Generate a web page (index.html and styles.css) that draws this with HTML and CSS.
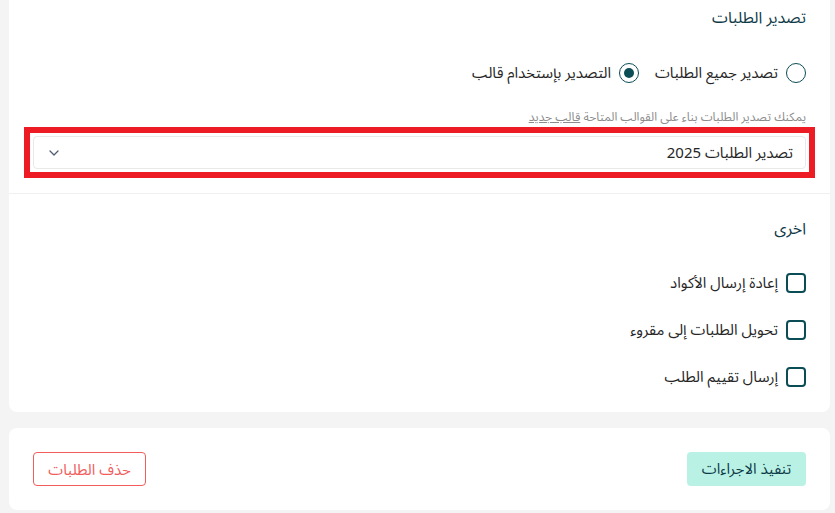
FILE: index.html
```html
<!DOCTYPE html>
<html lang="ar" dir="rtl">
<head>
    <meta charset="UTF-8">
    <meta name="viewport" content="width=device-width, initial-scale=1.0">
    <title>إجراءات الطلبات</title>
    <link rel="stylesheet" href="styles.css">
</head>
<body>

<div class="page">
    <div class="card main-card">
        <div class="block export">
            <h2 class="title">تصدير الطلبات</h2>

            <div class="radios">
                <label class="radio">
                    <span class="radio-dot"></span>
                    <span>تصدير جميع الطلبات</span>
                </label>
                <label class="radio checked">
                    <span class="radio-dot"></span>
                    <span>التصدير بإستخدام قالب</span>
                </label>
            </div>

            <p class="hint">يمكنك تصدير الطلبات بناء على القوالب المتاحة <a href="#">قالب جديد</a></p>

            <div class="highlight">
                <div class="select">
                    <span class="select-value">تصدير الطلبات 2025</span>
                    <svg class="chevron" width="10" height="6" viewBox="0 0 10 6">
                        <path d="M1 1l4 4 4-4" fill="none" stroke="#4f5f73" stroke-width="1.3" stroke-linecap="round" stroke-linejoin="round"/>
                    </svg>
                </div>
            </div>
        </div>

        <div class="block other">
            <h2 class="title">اخرى</h2>
            <div class="checks">
                <label class="check"><span class="box"></span><span>إعادة إرسال الأكواد</span></label>
                <label class="check"><span class="box"></span><span>تحويل الطلبات إلى مقروء</span></label>
                <label class="check"><span class="box"></span><span>إرسال تقييم الطلب</span></label>
            </div>
        </div>
    </div>

    <div class="card actions">
        <button class="btn btn-primary">تنفيذ الاجراءات</button>
        <button class="btn btn-danger">حذف الطلبات</button>
    </div>
</div>

</body>
</html>
```

FILE: styles.css
```css
body {
    margin: 0;
    padding: 0;
    background-color: #f4f4f4;
    color: #173f4c;
    font-family: "Noto Sans Arabic", "DejaVu Sans", "Noto Sans", sans-serif;
}
.page {
    padding: 0 5px 0 9px;
}
.card {
    background-color: #fff;
    border-radius: 0 0 8px 8px;
}
.block {
    padding: 6px 24px 24px;
}
.other {
    border-top: 1px solid #f0f0f0;
    padding-top: 23px;
    padding-bottom: 23px;
}
.title {
    margin: 0;
    font-size: 16px;
    font-weight: normal;
    line-height: 24px;
    color: #0f3a48;
}
.radios {
    display: flex;
    gap: 16px;
    margin-top: 31px;
}
.radio {
    display: flex;
    align-items: center;
    gap: 8px;
    font-size: 15px;
    line-height: 24px;
    color: #262626;
}
.radio-dot {
    width: 20px;
    height: 20px;
    box-sizing: border-box;
    border: 1.5px solid #0b4d55;
    border-radius: 50%;
    display: flex;
    align-items: center;
    justify-content: center;
}
.radio.checked .radio-dot::after {
    content: "";
    width: 10px;
    height: 10px;
    border-radius: 50%;
    background-color: #0b4d55;
}
.hint {
    margin: 24px 0 0;
    font-size: 12px;
    line-height: 18px;
    color: #8c8c8c;
}
.hint a {
    color: #8c8c8c;
}
.highlight {
    margin-top: 9px;
    outline: 6px solid #ed1c24;
    outline-offset: 3px;
}
.select {
    height: 33px;
    box-sizing: border-box;
    border: 1px solid #e9e9e9;
    border-radius: 4px;
    display: flex;
    align-items: center;
    justify-content: space-between;
    padding: 0 12px 0 15px;
    font-size: 15px;
    color: #262626;
}
.checks {
    margin-top: 30px;
    display: flex;
    flex-direction: column;
    gap: 23px;
}
.check {
    display: flex;
    align-items: center;
    gap: 8px;
    font-size: 15px;
    line-height: 24px;
    color: #262626;
}
.box {
    width: 20px;
    height: 20px;
    box-sizing: border-box;
    border: 2px solid #0b4d55;
    border-radius: 4px;
}
.actions {
    margin-top: 16px;
    border-radius: 8px;
    padding: 24px;
    display: flex;
    justify-content: space-between;
}
.btn {
    height: 34px;
    font-family: inherit;
    font-size: 15px;
    border-radius: 4px;
    cursor: pointer;
}
.btn-primary {
    width: 119px;
    background-color: #b9f2e4;
    color: #0f3a48;
    border: none;
}
.btn-danger {
    width: 113px;
    background-color: #fff;
    color: #f25c5c;
    border: 1px solid #f25c5c;
}
```
